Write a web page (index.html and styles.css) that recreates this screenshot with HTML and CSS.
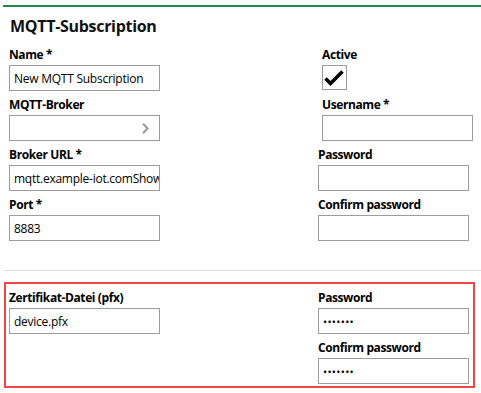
FILE: index.html
```html
<!DOCTYPE html>
<html lang="de">
  <head>
    <meta charset="UTF-8" />
    <title>MQTT-Subscription</title>
    <link rel="stylesheet" href="styles.css">
  </head>
  <body>
    <div class="page">
      <h1 class="title">MQTT-Subscription</h1>
      <div class="grid">
        <div class="col">
          <div class="field">
            <label>Name *</label>
            <input class="txt" type="text" value="New MQTT Subscription">
          </div>
          <div class="field">
            <label>MQTT-Broker</label>
            <div class="txt picker">
              <svg width="7" height="11" viewBox="0 0 7 11"><path d="M1 0.8 L5.6 5.5 L1 10.2" fill="none" stroke="#999" stroke-width="2"/></svg>
            </div>
          </div>
          <div class="field">
            <label>Broker URL *</label>
            <input class="txt" type="text" value="mqtt.example-iot.comShow">
          </div>
          <div class="field">
            <label>Port *</label>
            <input class="txt" type="text" value="8883">
          </div>
        </div>
        <div class="col">
          <div class="field shift">
            <label>Active</label>
            <div class="check">
              <svg width="23" height="23" viewBox="0 0 23 23"><path d="M2.5 12.5 L7.5 17.5 L19.5 5.5" fill="none" stroke="#000" stroke-width="3.6"/></svg>
            </div>
          </div>
          <div class="field shift">
            <label>Username *</label>
            <input class="txt" type="text" value="">
          </div>
          <div class="field">
            <label>Password</label>
            <input class="txt" type="password" value="">
          </div>
          <div class="field">
            <label>Confirm password</label>
            <input class="txt" type="password" value="">
          </div>
        </div>
      </div>
      <hr class="sep">
      <div class="grid cert">
        <div class="col">
          <div class="field">
            <label>Zertifikat-Datei (pfx)</label>
            <input class="txt" type="text" value="device.pfx">
          </div>
        </div>
        <div class="col">
          <div class="field">
            <label>Password</label>
            <input class="txt" type="password" value="1234567">
          </div>
          <div class="field">
            <label>Confirm password</label>
            <input class="txt" type="password" value="1234567">
          </div>
        </div>
      </div>
    </div>
  </body>
</html>
```
FILE: styles.css
```css
* {
  margin: 0;
  padding: 0;
  box-sizing: border-box;
}
body {
  background-color: #fff;
  font-family: "Open Sans", sans-serif;
  color: #000;
}
.page {
  margin: 5px 0 0 3px;
  border-top: 2px solid #1d8a45;
}
.title {
  margin: 8px 0 4px 7px;
  font-size: 16px;
  line-height: 22px;
  font-weight: 700;
  letter-spacing: -0.3px;
  color: #111;
}
.grid {
  display: grid;
  grid-template-columns: 151px 151px;
  column-gap: 158px;
  padding-left: 6px;
}
.field {
  display: flex;
  flex-direction: column;
}
.field label {
  margin: 6px 0 2px;
  font-size: 12px;
  line-height: 16px;
  font-weight: 700;
  letter-spacing: -0.4px;
}
.shift {
  margin-left: 4px;
}
.txt {
  width: 151px;
  height: 26px;
  border: 1px solid #9c9c9c;
  padding: 0 0 0 4px;
  font-family: "Open Sans", sans-serif;
  font-size: 12px;
  letter-spacing: -0.25px;
  color: #000;
  background-color: #fff;
  outline: none;
}
input[type="password"] {
  letter-spacing: 0.3px;
  font-size: 11px;
}
.picker {
  display: flex;
  justify-content: flex-end;
  align-items: center;
  padding-right: 10px;
}
.check {
  width: 25px;
  height: 25px;
  margin-bottom: 1px;
  border: 1px solid #9c9c9c;
  display: flex;
  align-items: center;
  justify-content: center;
}
.sep {
  margin: 29px 0 11px;
  border: none;
  border-top: 1px solid #dedede;
}
.cert {
  margin-left: 1px;
  width: 471px;
  border: 2px solid #f24646;
  padding: 0 0 2px 3px;
}
```
